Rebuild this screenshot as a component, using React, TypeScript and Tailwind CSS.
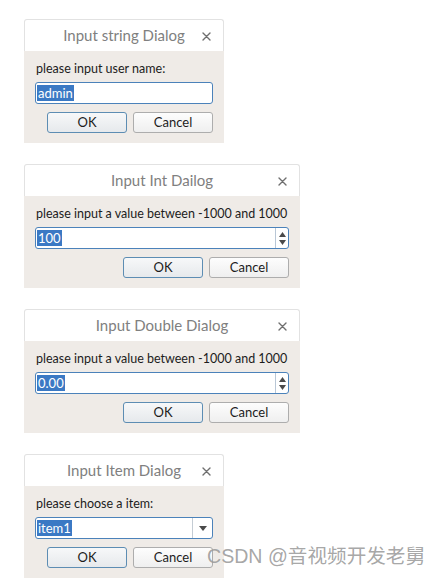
import React from 'react';

type Kind = 'text' | 'spin' | 'combo';

interface DialogProps {
  title: string;
  label: string;
  value: string;
  kind: Kind;
  wide?: boolean;
}

const font = { fontFamily: 'Lato, "Open Sans", sans-serif' };

function SpinArrows() {
  return (
    <div className="flex h-full w-[13px] flex-col items-center justify-center gap-[3px] border-l border-[#b9c7d6]">
      <svg width="7" height="5" viewBox="0 0 7 5">
        <path d="M3.5 0 L7 5 L0 5 Z" fill="#4a4a4a" />
      </svg>
      <svg width="7" height="5" viewBox="0 0 7 5">
        <path d="M0 0 L7 0 L3.5 5 Z" fill="#4a4a4a" />
      </svg>
    </div>
  );
}

function ComboArrow() {
  return (
    <div className="flex h-full w-[20px] items-center justify-center border-l border-[#c4ccd4]">
      <svg width="8" height="5" viewBox="0 0 8 5">
        <path d="M0 0 L8 0 L4 5 Z" fill="#4a4a4a" />
      </svg>
    </div>
  );
}

function Dialog({ title, label, value, kind, wide }: DialogProps) {
  return (
    <div className={wide ? 'w-[276px]' : 'w-[200px]'} style={font}>
      {/* Title bar */}
      <div className="relative flex h-[32px] items-center justify-center rounded-t-[3px] border-x border-t border-[#e2e2e2] bg-white">
        <span className="whitespace-nowrap text-[15px] text-[#808080]">{title}</span>
        <svg className="absolute right-[12px] top-[12px]" width="9" height="9" viewBox="0 0 9 9">
          <path d="M1 1 L8 8 M8 1 L1 8" stroke="#6f6f6f" strokeWidth="1.4" strokeLinecap="round" />
        </svg>
      </div>

      {/* Body */}
      <div className="bg-[#efebe7] px-[11px] pt-[10px] pb-[10px]">
        <div className="whitespace-nowrap pl-px text-[12.5px] leading-[16px] text-[#1c1c1c]">{label}</div>

        <div className="mt-[5px] flex h-[22px] items-stretch rounded-[3px] border border-[#4b82ba] bg-white">
          <div className="flex flex-1 items-center pl-px">
            <span className="bg-[#3b79c4] px-px text-[13px] leading-[16px] text-white">{value}</span>
          </div>
          {kind === 'spin' && <SpinArrows />}
          {kind === 'combo' && <ComboArrow />}
        </div>

        <div className="mt-[8px] flex justify-end gap-[6px]">
          <button className="h-[21px] w-[80px] rounded-[3px] border border-[#5d8db3] bg-gradient-to-b from-[#f7f8f9] to-[#e6e9ec] text-[13px] leading-none text-[#1c1c1c]">
            OK
          </button>
          <button className="h-[21px] w-[80px] rounded-[3px] border border-[#adadad] bg-gradient-to-b from-[#fdfdfd] to-[#efefef] text-[13px] leading-none text-[#1c1c1c]">
            Cancel
          </button>
        </div>
      </div>
    </div>
  );
}

export default function App() {
  return (
    <div className="relative h-[579px] w-[429px] overflow-hidden bg-white">
      <div className="flex flex-col gap-[21px] pl-[24px] pt-[19px]">
        <Dialog title="Input string Dialog" label="please input user name:" value="admin" kind="text" />
        <Dialog
          title="Input Int Dailog"
          label="please input a value between -1000 and 1000"
          value="100"
          kind="spin"
          wide
        />
        <Dialog
          title="Input Double Dialog"
          label="please input a value between -1000 and 1000"
          value="0.00"
          kind="spin"
          wide
        />
        <Dialog title="Input Item Dialog" label="please choose a item:" value="item1" kind="combo" />
      </div>

      {/* Watermark */}
      <div
        className="absolute left-[207px] top-[543px] whitespace-nowrap text-[19.6px] leading-[26px] text-[#9c9c9c]/90"
        style={{ fontFamily: '"Liberation Sans", "Noto Sans CJK SC", sans-serif' }}
      >
        CSDN @音视频开发老舅
      </div>
    </div>
  );
}
